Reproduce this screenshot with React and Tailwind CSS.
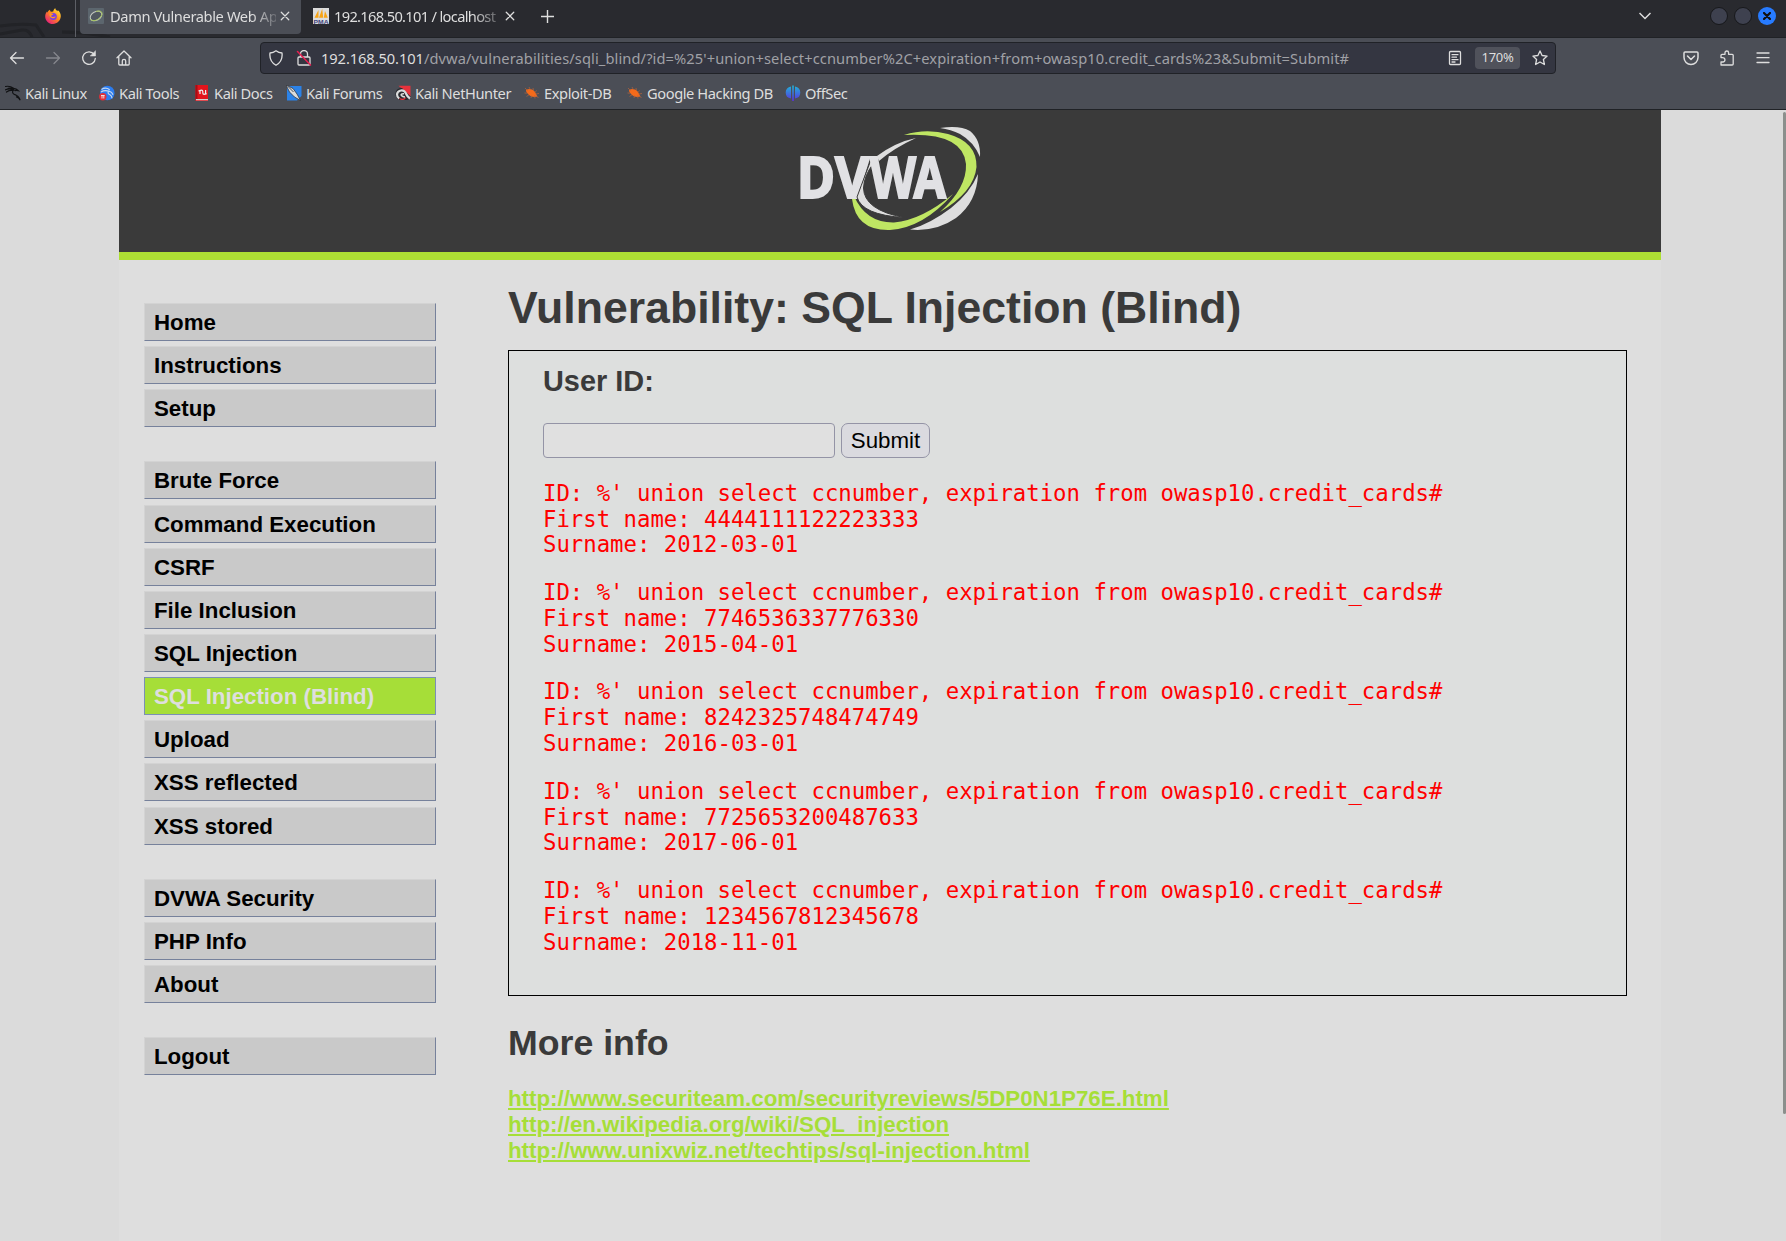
import React from "react";

const menu = [
  ["Home", "mt-0"],
  ["Instructions", "mt-[5px]"],
  ["Setup", "mt-[5px]"],
  ["Brute Force", "mt-[34px]"],
  ["Command Execution", "mt-[6px]"],
  ["CSRF", "mt-[5px]"],
  ["File Inclusion", "mt-[5px]"],
  ["SQL Injection", "mt-[5px]"],
  ["SQL Injection (Blind)", "mt-[5px]"],
  ["Upload", "mt-[5px]"],
  ["XSS reflected", "mt-[5px]"],
  ["XSS stored", "mt-[6px]"],
  ["DVWA Security", "mt-[34px]"],
  ["PHP Info", "mt-[5px]"],
  ["About", "mt-[5px]"],
  ["Logout", "mt-[34px]"],
];

const rows = [
  ["4444111122223333", "2012-03-01"],
  ["7746536337776330", "2015-04-01"],
  ["8242325748474749", "2016-03-01"],
  ["7725653200487633", "2017-06-01"],
  ["1234567812345678", "2018-11-01"],
];

const links = [
  "http://www.securiteam.com/securityreviews/5DP0N1P76E.html",
  "http://en.wikipedia.org/wiki/SQL_injection",
  "http://www.unixwiz.net/techtips/sql-injection.html",
];

function Icon({ children, className = "", size = 16 }) {
  return (
    <svg
      width={size}
      height={size}
      viewBox="0 0 16 16"
      fill="none"
      stroke="currentColor"
      strokeWidth="1.3"
      strokeLinecap="round"
      strokeLinejoin="round"
      className={"block shrink-0 " + className}
    >
      {children}
    </svg>
  );
}

const Close = () => (
  <Icon size={10}>
    <path d="M2 2l12 12M14 2L2 14" strokeWidth="2" />
  </Icon>
);

const Firefox = () => (
  <svg width="16" height="16" viewBox="0 0 16 16" className="block">
    <defs>
      <linearGradient id="fx" x1="0.9" y1="0.1" x2="0.2" y2="0.95">
        <stop offset="0" stopColor="#ffe03a" />
        <stop offset="0.45" stopColor="#ff8a1c" />
        <stop offset="1" stopColor="#e8207a" />
      </linearGradient>
    </defs>
    <path d="M10.3 0C10 1.4 11.6 2.4 12.4 3.2c.4-.2.3-.9.2-1.2C14.8 3.6 16 6 15.8 8.6 15.4 12.800 12 16 8 16 3.600 16 0 12.500.2 8.200.3 6.200 1 4.500 2 3.400c0 .5 0 .8.2 1.100C3 3.200 4 2.200 5 1.700c0 .8.300 1.600.9 2.100L8.200 3.400C8.500 2 9.200.8 10.300 0z" fill="url(#fx)" />
    <circle cx="8.300" cy="8.400" r="3.500" fill="#7b3fe4" />
    <path d="M4.500 5.600c1.600-.6 2.800.1 3.900.7-.5.900-2 .7-2.300 1.800.8 1.600 3.200.9 4.600.1-.3 2.300-3.800 2.900-5.400 1C4.300 8.200 4.200 6.700 4.500 5.600z" fill="#ff9a22" />
  </svg>
);

const DvwaIcon = () => (
  <svg width="16" height="16" viewBox="0 0 16 16" className="block shrink-0">
    <rect width="16" height="16" rx="1" fill="#5c666e" />
    <ellipse cx="8" cy="8" rx="6.200" ry="4.200" transform="rotate(-28 8 8)" fill="#50585f" stroke="#c3c8c0" strokeWidth="1.100" />
    <path d="M2 11c1.500 2.400 6 2 9-.3M8 3.500c3-1 5.600-.6 6 1.500.3 2-1 4-3 5.700" fill="none" stroke="#a3c25c" strokeWidth="1" />
  </svg>
);

const PmaIcon = () => (
  <svg width="16" height="16" viewBox="0 0 16 16" className="block shrink-0">
    <rect width="16" height="16" fill="#dcdcdc" />
    <path d="M1.500 9.800L5.500 2v7.800zM6 9.800L9.200.8l1 9zM10.800 9.800L12 3l2.800 6.800z" fill="#f7a415" />
    <text x="0.500" y="15.700" fontFamily="Liberation Sans" fontWeight="bold" fontSize="6.200" textLength="15" lengthAdjust="spacingAndGlyphs" fill="#42477f">PMA</text>
  </svg>
);

const Bug = () => (
  <svg width="16" height="16" viewBox="0 0 16 16" className="block">
    <path d="M2 5c3-2 7-1 9 2 1.200 2 2 3.500 2.500 4.500-3 .8-6.500.5-8.500-1.500C3.500 8.500 2 7 2 5z" fill="#f46a1a" />
    <path d="M5 2l1.500 3M9 3l.5 2.500M12.500 5.500L11 7.500M15 8.500l-3.500.5M1 3l2.500 2.500M.500 8l3 .200M2.500 11.500l2.500-1.700M7 13l.500-2.500M11 13.500l-.500-3M14.500 13l-2.500-2.500" stroke="#b8633a" strokeWidth=".7" />
  </svg>
);

const bookmarks = [
  ["Kali Linux", "w-[94px]", (
    <svg width="16" height="16" viewBox="0 0 16 16" className="block">
      <path d="M.500 1.500c3-.6 6 .2 8 1.800C7 3.300 5 3 3.200 3.300M.500 4.800C3 3.600 5.800 3.600 8.300 4.600M1.500 7C4 4.800 7 5.200 9 5M8.500 3.300c2 .2 3.500 1 4.800 2.400-1.200-.3-2.300-.4-3.300-.1M8.800 5C7 6 7.200 8.600 9.300 9.400c2.500.8 4.500 1.800 5.900 5.900-1-2-2.200-3-3.700-3.400" fill="none" stroke="#111214" strokeWidth="1.200" strokeLinecap="round" />
    </svg>
  )],
  ["Kali Tools", "w-[94px]", (
    <svg width="16" height="16" viewBox="0 0 16 16" className="block">
      <circle cx="8.300" cy="8" r="7.300" fill="#2b7cf0" />
      <path d="M2.500 4.500c3-2 6.500-1 8.200.3M2 7c3-2 6.300-1.300 8-.8 2.500.6 3.500 2 4 3.500M10 6c-2 1.600-.5 3 1 3.700 1.300.7 2 2 2 3.500" stroke="#c5d8ee" strokeWidth="1.200" fill="none" />
      <circle cx="3.800" cy="11.800" r="3.700" fill="#e02f38" />
      <path d="M2 10.500h3.600M3 10.500v3M4.800 10.500v3" stroke="#eee" strokeWidth=".9" />
    </svg>
  )],
  ["Kali Docs", "w-[93px]", (
    <svg width="17" height="16" viewBox="0 0 17 16" className="block">
      <path d="M2.500 0h12.500v16H2.500z" fill="#e4141c" />
      <path d="M2.500 0h2v14h-2z" fill="#a80d14" />
      <path d="M3 14h12v1.300H3z" fill="#d5cfcf" />
      <path d="M7 9V6.500a1.400 1.400 0 0 1 2.800 0V8a1.400 1.400 0 0 0 2.800 0V5M5.500 6l2-.8M12 9.300l1.700-.7" stroke="#eee" strokeWidth="1.200" fill="none" />
    </svg>
  )],
  ["Kali Forums", "w-[109px]", (
    <svg width="16" height="16" viewBox="0 0 16 16" className="block">
      <path d="M1 1h14.500v10L11 15.500H1z" fill="#2b82e8" />
      <path d="M0 0l7 3.500L11 9l3.500 6.500-6-3.500L3.500 7z" fill="#dcdcdc" stroke="#26282d" strokeWidth=".7" />
      <path d="M2 1.500l5.500 5.500" stroke="#26282d" strokeWidth=".8" fill="none" />
    </svg>
  )],
  ["Kali NetHunter", "w-[129px]", (
    <svg width="16" height="16" viewBox="0 0 16 16" className="block">
      <path d="M3.500.800h12v10.500L12 8.500 8 4.500z" fill="#e8323c" />
      <path d="M.500 8.500C.500 5 3.500 2.500 7 3l8.500 8.500v2L12 15H4C1.500 14 .500 11.500.500 8.500z" fill="#2a2b30" />
      <path d="M4.200 13.500C1.200 11.500 1.200 7 5 5.700c3.500-1 5.500 1.300 6.500 3.800.7 1.700 1.700 2.800 3.500 4" stroke="#dcdcdc" strokeWidth="2.200" fill="none" />
      <path d="M4.500 13.500c2.500 1.500 5 1 6-1" stroke="#e8323c" strokeWidth="1.200" fill="none" />
      <path d="M9 8.800c-2.300-.3-3.300.6-2.600 1.800.8 1 2 1.400 3.600 1.400" stroke="#dcdcdc" strokeWidth="1.600" fill="none" />
    </svg>
  )],
  ["Exploit-DB", "w-[103px]", <Bug />],
  ["Google Hacking DB", "w-[158px]", <Bug />],
  ["OffSec", "w-[80px]", (
    <svg width="16" height="16" viewBox="0 0 16 16" className="block">
      <defs>
        <linearGradient id="os" x1="0" y1="0" x2="0" y2="1">
          <stop offset="0" stopColor="#1fb5d8" />
          <stop offset="1" stopColor="#5a2fe0" />
        </linearGradient>
      </defs>
      <path d="M6 1.500v12C2.500 13 .700 11 .700 7.500S2.700 2 6 1.500zM10 1.500v12c3.500-.5 5.300-2.500 5.300-6S13.300 2 10 1.500zM7.200.500h1.600V16H7.200z" fill="url(#os)" />
    </svg>
  )],
];

function TabBar() {
  return (
    <div className="relative flex h-[38px] items-start border-b border-[#202226] bg-[#292a2f]">
      <svg width="140" height="37" className="absolute left-0 top-0">
        <path d="M0 26q20-3 36-1l8 12M0 34l22-4q7-1 10 7M62 32q24 0 48 5" fill="none" stroke="#222327" strokeWidth="3" />
      </svg>
      <div className="relative flex h-[37px] w-[76px] justify-end border-r border-[#5d5f66] pr-[14px] pt-2"><Firefox /></div>
      <div className="relative ml-1 flex h-[34px] w-[221px] items-center rounded-b bg-[#4b4e56] pl-2 pb-[2px]">
        <DvwaIcon />
        <span className="ml-[6px] w-[166px] whitespace-nowrap tracking-[-0.39px] [mask-image:linear-gradient(to_right,black_85%,transparent_104%)]">Damn Vulnerable Web Ap</span>
        <span className="ml-1"><Close /></span>
      </div>
      <div className="flex h-[34px] w-[221px] items-center pl-3 pb-[2px]">
        <PmaIcon />
        <span className="ml-[5px] w-[167px] whitespace-nowrap tracking-[-0.68px] [mask-image:linear-gradient(to_right,black_83%,transparent_104%)]">192.168.50.101 / localhost</span>
        <span className="ml-1"><Close /></span>
      </div>
      <svg width="13" height="13" viewBox="0 0 13 13" className="ml-[19px] mt-[10px]" stroke="#dedede" strokeWidth="1.400"><path d="M6.500 0v13M0 6.500h13" /></svg>
      <div className="flex-1" />
      <svg width="12" height="8" viewBox="0 0 12 8" className="mr-[59px] mt-3" fill="none" stroke="#dedede" strokeWidth="1.500"><path d="M.500 1L6 6.500 11.500 1" /></svg>
      <div className="mr-[10px] mt-[7px] flex gap-[6px]">
        <div className="h-[18px] w-[18px] rounded-full border border-[#17181b] bg-[#3e414f]" />
        <div className="h-[18px] w-[18px] rounded-full border border-[#17181b] bg-[#3e414f]" />
        <div className="flex h-[18px] w-[18px] items-center justify-center rounded-full bg-[#277bff] text-[#111]">
          <Icon size={8}><path d="M2 2l12 12M14 2L2 14" strokeWidth="4.500" /></Icon>
        </div>
      </div>
    </div>
  );
}

function NavBar() {
  return (
    <div className="flex h-[40px] items-center">
      <div className="flex w-[260px] items-center pl-[9px]">
        <Icon><path d="M14.500 8H1.500M7 2.500L1.500 8 7 13.500" /></Icon>
        <Icon className="ml-5 text-[#85878d]"><path d="M1.500 8h13M9 2.500L14.500 8 9 13.500" /></Icon>
        <Icon className="ml-5"><path d="M13.200 4.500A6.300 6.300 0 1 0 14.300 8.500" /><path d="M14.500 1v5h-5z" fill="currentColor" strokeWidth=".5" /></Icon>
        <Icon className="ml-[19px]"><path d="M1 7.800L8 1l7 6.800M2.800 6.500V14a1 1 0 0 0 1 1h8.400a1 1 0 0 0 1-1V6.500M6.300 15v-4a1.700 1.700 0 0 1 3.400 0v4" /></Icon>
      </div>
      <div className="mt-[-1px] flex h-[32px] w-[1296px] items-center rounded border border-[#202227] bg-[#343641]">
        <Icon className="ml-[7px]"><path d="M8 .8C10 2.300 12 2.900 14 3c.6 5-1 9.600-6 12.300C3 12.600 1.400 8 2 3c2-.1 4-.7 6-2.200z" /></Icon>
        <Icon className="ml-3">
          <path d="M4.500 7V4a3.500 3.500 0 0 1 7 0v3M3 7h10a1 1 0 0 1 1 1v6a1 1 0 0 1-1 1H3a1 1 0 0 1-1-1V8a1 1 0 0 1 1-1z" />
          <path d="M1.500 1.500l13 13.500" stroke="#e81e50" strokeWidth="1.500" />
        </Icon>
        <span className="ml-[9px] w-[1122px] whitespace-nowrap tracking-[0.096px] text-[#a0a1a6]"><span className="tracking-[-0.08px] text-[#dedede]">192.168.50.101</span>/dvwa/vulnerabilities/sqli_blind/?id=%25'+union+select+ccnumber%2C+expiration+from+owasp10.credit_cards%23&amp;Submit=Submit#</span>
        <Icon className="ml-1"><path d="M3.500 1.500h9a1 1 0 0 1 1 1v11a1 1 0 0 1-1 1h-9a1 1 0 0 1-1-1v-11a1 1 0 0 1 1-1zM5 4.700h6M5 7.200h4.500M5 9.700h6M5 12h3" /></Icon>
        <span className="ml-3 flex h-[22px] w-[45px] items-center justify-center rounded bg-[#50525b] text-[13px] tracking-[-0.3px]">170%</span>
        <Icon className="ml-3"><path d="M8 .9l2.100 4.600 5 .6-3.700 3.400 1 5L8 12l-4.400 2.500 1-5L.900 6.100l5-.6z" /></Icon>
      </div>
      <Icon className="ml-[127px]"><path d="M2 2h12a1 1 0 0 1 1 1v4.500a7 7 0 0 1-14 0V3a1 1 0 0 1 1-1zM4.500 6L8 9.500 11.500 6" strokeWidth="1.500" /></Icon>
      <Icon className="ml-5"><path d="M2 7.500V5.300a1 1 0 0 1 1-1h3V2.800a1.800 1.800 0 0 1 3.600 0v1.500h3.600a1 1 0 0 1 1 1V14a1 1 0 0 1-1 1H2v-3h1.800a2 2 0 0 0 0-4.300z" /></Icon>
      <Icon className="ml-5"><path d="M2 3h12M2 7.700h12M2 12.500h12" /></Icon>
    </div>
  );
}

function Logo() {
  return (
    <svg width="220" height="142" viewBox="0 0 220 142" className="mx-auto block">
      <path d="M160 18Q180 15 190 21Q201 30 200 47Q194 32 180 24Q171 19.500 160 18z" fill="#dedede" />
      <path d="M198 64Q197 92 176 108Q156 122 130 119.500Q150 114 171 98Q190 83 198 64z" fill="#dedede" />
      <path d="M124 25Q146 18 168 24Q197 32 196.500 57Q194 82 160 102Q187 78 186 54Q183 22 124 25z" fill="#bfe663" />
      <path d="M72 89Q76 121 110 120Q143 118 173 84Q142 110 114 112.500Q86 113 74 86z" fill="#bfe663" />
      <g fontFamily="Noto Sans" fontWeight="bold" fontSize="57.500" fill="#e1e1e4" stroke="#e1e1e4" strokeWidth="2">
        <text x="17" y="88" textLength="38" lengthAdjust="spacingAndGlyphs">D</text>
        <text x="55" y="88" textLength="34.500" lengthAdjust="spacingAndGlyphs">V</text>
      </g>
      <path d="M92 47L86 63Q81 76 77 87Q82 105 124 107.500Q84 100 83.500 78Q84 66 93 54z" fill="#dedede" stroke="#3a3a3a" strokeWidth="1" />
      <path d="M136 28Q116 32 97 46L99 51Q114 38 136 28z" fill="#dedede" />
      <g fontFamily="Noto Sans" fontWeight="bold" fontSize="57.500" fill="#e1e1e4" stroke="#e1e1e4" strokeWidth="2">
        <text x="90" y="88" textLength="46" lengthAdjust="spacingAndGlyphs">W</text>
        <text x="133.500" y="88" textLength="32.500" lengthAdjust="spacingAndGlyphs">A</text>
      </g>
    </svg>
  );
}

function Page() {
  return (
    <div className="flex h-[1131px] bg-[#dbdbdb]">
      <div className="ml-[119px] w-[1542px] bg-[#dedede]">
        <header className="h-[150px] border-b-8 border-[#addf34] bg-[#3a3a3a]"><Logo /></header>
        <div className="flex font-['Liberation_Sans',sans-serif]">
          <nav className="ml-[25px] mt-[43px] w-[292px] shrink-0 text-[22.3px] font-bold text-black">
            {menu.map(([label, gap]) => (
              <div
                key={label}
                className={
                  "flex h-[38px] items-center border pl-[9px] pt-[2px] leading-[34px] " + gap +
                  (label === "SQL Injection (Blind)"
                    ? " border-[#7b90b5] bg-[#a6de38] text-[#dedede]"
                    : " border-r-[#76819b] border-b-[#76819b] border-l-[#d3d3d3] border-t-[#d3d3d3] bg-[#c9c9c9]")
                }
              >
                {label}
              </div>
            ))}
          </nav>
          <main className="ml-[72px] w-[1119px] text-[#3a3a3a]">
            <h1 className="mt-[23px] h-[50px] text-[44.6px] font-bold leading-[50px]">Vulnerability: SQL Injection (Blind)</h1>
            <section className="mt-[17px] h-[646px] border border-black bg-[#dddfde] pl-[34px]">
              <h3 className="mt-[13px] text-[28.9px] font-bold leading-[34px]">User ID:</h3>
              <div className="mt-[25px] flex gap-[6px]">
                <input className="h-[35px] w-[292px] rounded border border-[#9494a6] bg-[#e0e0e0]" />
                <button className="h-[35px] w-[89px] rounded-[7px] border border-[#9494a6] bg-[#dadadf] pt-[2px] text-[22.3px] leading-none text-black">Submit</button>
              </div>
              <div className="mt-[22.8px] font-['DejaVu_Sans_Mono',monospace] text-[22.3px] leading-[25.75px] text-[#ff0000]">
                {rows.map(([first, last]) => (
                  <pre key={first} className="mb-[22.1px] font-[inherit]">{`ID: %' union select ccnumber, expiration from owasp10.credit_cards#\nFirst name: ${first}\nSurname: ${last}`}</pre>
                ))}
              </div>
            </section>
            <h2 className="mt-[27px] text-[35.7px] font-bold leading-[41px]">More info</h2>
            <ul className="mt-[22px] text-[22.3px] font-bold leading-[26px] text-[#a6de38]">
              {links.map((l) => (
                <li key={l}><a className="underline">{l}</a></li>
              ))}
            </ul>
          </main>
        </div>
      </div>
      <div className="ml-auto mt-[2px] h-[1002px] w-[3px] rounded-sm bg-[#8b8f8c]" />
    </div>
  );
}

export default function App() {
  return (
    <div className="h-[1241px] w-[1786px] overflow-hidden font-['Noto_Sans',sans-serif] text-[14.67px] text-[#dedede]">
      <TabBar />
      <div className="h-[72px] border-b border-[#202226] bg-[#4b4e56]">
        <NavBar />
        <div className="flex h-[31px] items-center pl-[5px] pb-px">
          {bookmarks.map(([label, width, icon]) => (
            <div key={label} className={"flex shrink-0 items-center gap-1 whitespace-nowrap tracking-[-0.42px] " + width}>
              {icon}
              <span>{label}</span>
            </div>
          ))}
        </div>
      </div>
      <Page />
    </div>
  );
}
